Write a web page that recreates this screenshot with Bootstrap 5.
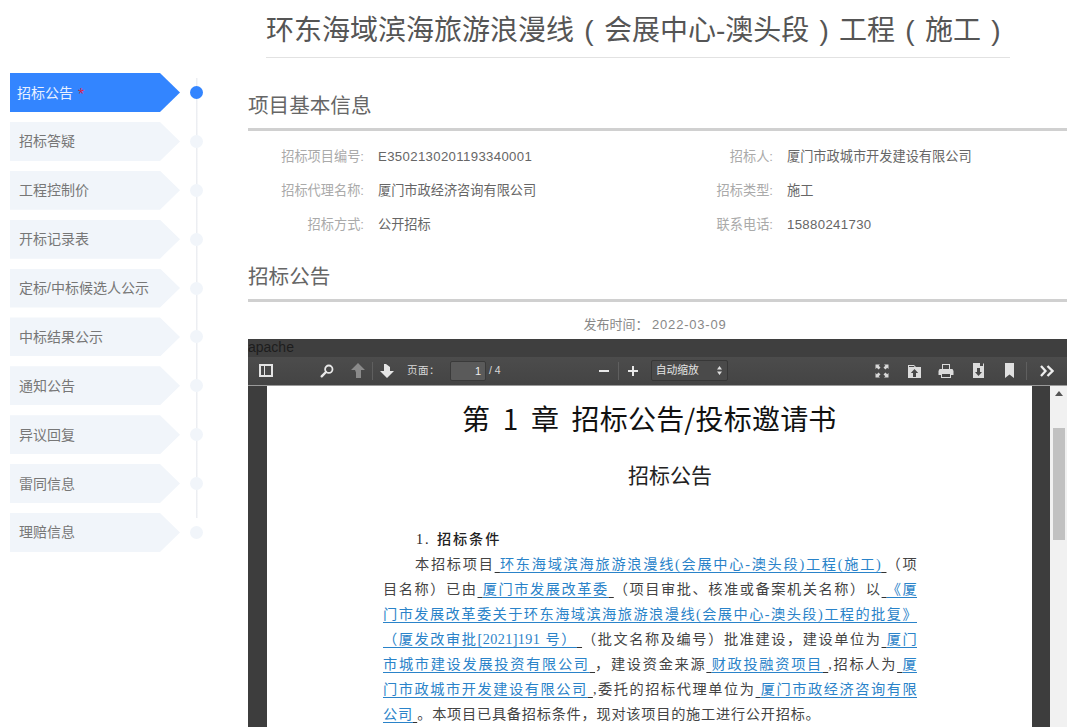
<!DOCTYPE html>
<html lang="zh-CN">
<head>
<meta charset="utf-8">
<link rel="stylesheet" href="https://cdn.jsdelivr.net/npm/bootstrap@5.3.0/dist/css/bootstrap.min.css">
<style>
html,body{height:727px;overflow:hidden;background:#fff}
body{font-family:"Liberation Sans","Noto Sans CJK SC",sans-serif;color:#555}
.shell{width:1080px;height:727px;padding-right:13px}
.side{width:238px;margin-left:10px;padding-top:73px;flex:none}
.steps{width:193px;flex:none;display:flex;flex-direction:column;gap:9.88px;background:linear-gradient(#eceef2,#eceef2) no-repeat 186px 5px/1.5px 440px}
.step{height:39px;display:flex;align-items:center;justify-content:space-between}
.tab{width:170px;height:39px;display:flex;align-items:center;padding-left:9px;background:#f1f5fa;color:#777;font-size:14px;padding-top:1px;clip-path:polygon(0 0,150px 0,170px 50%,150px 100%,0 100%)}
.dot{width:13px;height:13px;border-radius:50%;background:#f1f5fa;margin-right:.5px}
.step.on .tab{background:#3385ff;color:#e8f0ff;padding-left:7px}
.step.on .dot{background:#3385ff}
.star{color:#d8294f;margin-left:5px;font-size:16px;line-height:16px;padding-top:3px}
.mainc{width:819px;flex:none}
.title{margin:0 57px 0 18px;height:57.5px;padding-top:10px;border-bottom:1px solid #e2e2e2;font-size:28px;line-height:42px;color:#555;font-weight:400;white-space:nowrap;word-spacing:2.5px}
.sec{height:41px;margin:0;font-size:20.6px;line-height:31px;font-weight:400;color:#666;border-bottom:3px solid #d0d0d0}
.sec1{margin-top:32px}
.sec2{margin-top:19px}
.grid{display:grid;grid-template-columns:116px 293px 116px 1fr;margin-top:9px;font-size:13.2px;line-height:34px;height:102px}
.lab{text-align:right;color:#aaa}
.val{padding-left:14px;color:#666;white-space:nowrap}
.nums{letter-spacing:.35px}
.pub{height:37px;line-height:45px;text-align:center;font-size:13px;color:#888;padding-right:5px}
.pub span{letter-spacing:.8px}
.viewer{height:388px;background:#3e3e3e;overflow:hidden}
.apache{height:18px;line-height:17px;font-size:14px;color:#1d1d1d;background:#3f3f3f}
.tools{height:29px;background:linear-gradient(#4c4c4c,#444);border-bottom:1px solid #9a9a9a;color:#d9d9d9;font-size:10.5px;padding:0 11px}
.tools svg{display:block;flex:none}
.sep{width:1px;height:18px;background:#5f5f5f;flex:none}
.pg{width:36px;height:20px;margin-left:10px;background:#5a5a5a;border:1px solid #3a3a3a;border-radius:2px;text-align:right;padding-right:4px;line-height:18px;font-size:11px;color:#eee}
.pgtxt{margin-left:13px;letter-spacing:.5px;white-space:nowrap}
.pgof{margin-left:3px;white-space:nowrap}
.zoomsel{width:77px;height:21px;margin-left:13px;background:#4a4a4a;border:1px solid #373737;border-radius:2px;line-height:19px;padding:0 5px 0 4px;font-size:10.8px;color:#e4e4e4}
.m7{margin-left:7px}.m9{margin-left:9px}.m12{margin-left:12px}.m13{margin-left:13px}.m16{margin-left:16px}.m17{margin-left:17px}.m18{margin-left:18px}.m20{margin-left:20px}.m47{margin-left:47px}.m98{margin-left:98px}.m147{margin-left:147px}
.pane{height:341px}
.gut1{width:19px;flex:none;background:#3d3d3d}
.gut2{width:18px;flex:none;background:#3d3d3d}
.page{width:765px;flex:none;background:#fff;color:#333;overflow:hidden;font-family:"Noto Sans CJK SC",sans-serif}
.h1p{font-size:28px;line-height:40px;margin:12px 0 0 195px;color:#111;font-weight:400;white-space:nowrap;word-spacing:6px;letter-spacing:.2px}
.h2p{font-size:21px;line-height:30px;margin:21px 0 0 0;text-align:center;color:#222;font-weight:400;padding-left:41px}
.doc{margin:38px 0 0 116px;width:534px;font-family:"Liberation Serif","Noto Sans CJK SC",serif;font-size:14.2px;line-height:25.1px;color:#444;letter-spacing:.4px}
.ln{white-space:nowrap;text-align:justify;text-align-last:justify}
.ln.short{text-align-last:left;letter-spacing:.75px}
.lk{color:#2a83c9;text-decoration:underline;text-underline-offset:3px}
.ul{text-decoration:underline;text-decoration-color:#333;text-underline-offset:3px}
.ln.num{padding-left:33px;color:#222;font-weight:500;letter-spacing:1.9px;word-spacing:1px}
.ind{padding-left:32px}
.sb{width:17px;flex:none;background:#f1f1f1}
.sbup{height:15px}
.sbth{width:12px;height:112px;margin:27px 0 0 3px;background:#c1c1c1}
</style>
</head>
<body>
<div class="shell d-flex">
  <div class="side d-flex">
    <div class="steps">
      <div class="step on"><div class="tab">招标公告<span class="star">*</span></div><div class="dot"></div></div>
      <div class="step"><div class="tab">招标答疑</div><div class="dot"></div></div>
      <div class="step"><div class="tab">工程控制价</div><div class="dot"></div></div>
      <div class="step"><div class="tab">开标记录表</div><div class="dot"></div></div>
      <div class="step"><div class="tab">定标/中标候选人公示</div><div class="dot"></div></div>
      <div class="step"><div class="tab">中标结果公示</div><div class="dot"></div></div>
      <div class="step"><div class="tab">通知公告</div><div class="dot"></div></div>
      <div class="step"><div class="tab">异议回复</div><div class="dot"></div></div>
      <div class="step"><div class="tab">雷同信息</div><div class="dot"></div></div>
      <div class="step"><div class="tab">理赔信息</div><div class="dot"></div></div>
    </div>
  </div>
  <div class="mainc">
    <h1 class="title">环东海域滨海旅游浪漫线 ( 会展中心-澳头段 ) 工程 ( 施工 )</h1>
    <h2 class="sec sec1">项目基本信息</h2>
    <div class="grid">
      <div class="lab">招标项目编号:</div><div class="val nums">E3502130201193340001</div>
      <div class="lab">招标人:</div><div class="val">厦门市政城市开发建设有限公司</div>
      <div class="lab">招标代理名称:</div><div class="val">厦门市政经济咨询有限公司</div>
      <div class="lab">招标类型:</div><div class="val">施工</div>
      <div class="lab">招标方式:</div><div class="val">公开招标</div>
      <div class="lab">联系电话:</div><div class="val nums">15880241730</div>
    </div>
    <h2 class="sec sec2">招标公告</h2>
    <div class="pub">发布时间： <span>2022-03-09</span></div>
    <div class="viewer">
      <div class="apache">apache</div>
      <div class="tools d-flex align-items-center">
        <svg width="14" height="13" viewBox="0 0 14 13"><path fill="#e4e4e4" fill-rule="evenodd" d="M0 0h14v13H0zM2 2v9h3V2zm4 0v9h6V2z"/></svg>
        <svg class="m47" width="14" height="14" viewBox="0 0 14 14"><circle cx="8.800" cy="5.200" r="3.700" fill="none" stroke="#e8e8e8" stroke-width="1.800"/><path stroke="#e8e8e8" stroke-width="2.400" stroke-linecap="round" d="M6 8l-4.300 4.300"/></svg>
        <svg class="m17" width="14" height="15" viewBox="0 0 14 15"><path fill="#8a8a8a" d="M7 0l7 7H10v8H5V9.500L4 7H0z"/></svg>
        <div class="sep m7"></div>
        <svg class="m7" width="14" height="15" viewBox="0 0 14 15"><path fill="#e6e6e6" d="M7 15L0 8h4V1h2l4 3v4h4z"/></svg>
        <span class="pgtxt">页面：</span>
        <div class="pg">1</div>
        <span class="pgof">/ 4</span>
        <svg class="m98" width="10" height="10" viewBox="0 0 10 10"><path fill="#e8e8e8" d="M0 4h10v2H0z"/></svg>
        <div class="sep m9"></div>
        <svg class="m9" width="10" height="10" viewBox="0 0 10 10"><path fill="#e8e8e8" d="M4 0h2v4h4v2H6v4H4V6H0V4h4z"/></svg>
        <div class="zoomsel d-flex justify-content-between align-items-center"><span>自动缩放</span><svg width="5" height="9" viewBox="0 0 5 9"><path fill="#ddd" d="M2.500 0L5 3.400H0zM2.500 9L0 5.600h5z"/></svg></div>
        <svg class="m147" width="14" height="14" viewBox="0 0 14 14"><path fill="#d8d8d8" d="M.5.500h4.500L3.700 1.800l1.800 1.800-1.900 1.900-1.800-1.800L.5 5zM13.500.500V5l-1.300-1.300-1.800 1.800-1.900-1.900 1.800-1.800L9 .5zM.5 13.500V9l1.300 1.300 1.800-1.800 1.900 1.900-1.800 1.800L5 13.500zM13.500 13.500H9l1.300-1.300-1.800-1.800 1.900-1.900 1.800 1.800L13.500 9z"/></svg>
        <svg class="m18" width="15" height="14" viewBox="0 0 15 14"><path fill="#dcdcdc" fill-rule="evenodd" d="M1 4V1h6l2 2h5v11H1zM2 2v1h5.500L7 2zM7.500 5L3.800 9H6v4h3V9h2.200z"/></svg>
        <svg class="m16" width="16" height="14" viewBox="0 0 16 14"><path fill="#dcdcdc" fill-rule="evenodd" d="M4 0h8v5h2.500l1 2v4H13v3H3v-3H.5V7l1-2H4zM5 1v4h6V1zM4 10v3h8v-3z"/></svg>
        <svg class="m18" width="13" height="15" viewBox="0 0 13 15"><path fill="#dcdcdc" fill-rule="evenodd" d="M1 0h7v3h3V0l1 1v14H1zM5 5v4H3l3.500 4L10 9H8V5z"/></svg>
        <svg class="m20" width="9" height="15" viewBox="0 0 9 15"><path fill="#e0e0e0" d="M0 0h9v15l-4.500-3.500L0 15z"/></svg>
        <div class="sep m12"></div>
        <svg class="m13" width="14" height="12" viewBox="0 0 14 12"><path fill="none" stroke="#eee" stroke-width="2.300" d="M1 1l4.500 5-4.500 5M7.500 1l5 5-5 5"/></svg>
      </div>
      <div class="pane d-flex">
        <div class="gut1"></div>
        <div class="page">
          <div class="h1p">第 1 章 招标公告/投标邀请书</div>
          <div class="h2p">招标公告</div>
          <div class="doc">
            <div class="ln short num">1.&nbsp;招标条件</div>
            <div class="ln ind">本招标项目<u class="ul">&nbsp;</u><span class="lk">环东海域滨海旅游浪漫线(会展中心-澳头段)工程(施工)</span><u class="ul">&nbsp;</u>（项</div>
            <div class="ln">目名称）已由<u class="ul">&nbsp;</u><span class="lk">厦门市发展改革委</span><u class="ul">&nbsp;</u>（项目审批、核准或备案机关名称）以<u class="ul">&nbsp;</u><span class="lk">《厦</span></div>
            <div class="ln"><span class="lk">门市发展改革委关于环东海域滨海旅游浪漫线(会展中心-澳头段)工程的批复》</span></div>
            <div class="ln"><span class="lk">（厦发改审批[2021]191 号）</span><u class="ul">&nbsp;</u>（批文名称及编号）批准建设，建设单位为<u class="ul">&nbsp;</u><span class="lk">厦门</span></div>
            <div class="ln"><span class="lk">市城市建设发展投资有限公司</span><u class="ul">&nbsp;</u>，建设资金来源<u class="ul">&nbsp;</u><span class="lk">财政投融资项目</span><u class="ul">&nbsp;</u>,招标人为<u class="ul">&nbsp;</u><span class="lk">厦</span></div>
            <div class="ln"><span class="lk">门市政城市开发建设有限公司</span><u class="ul">&nbsp;</u>,委托的招标代理单位为<u class="ul">&nbsp;</u><span class="lk">厦门市政经济咨询有限</span></div>
            <div class="ln short"><span class="lk">公司</span><u class="ul">&nbsp;</u>。本项目已具备招标条件，现对该项目的施工进行公开招标。</div>
          </div>
        </div>
        <div class="gut2"></div>
        <div class="sb">
          <div class="sbup d-flex justify-content-center align-items-center"><svg width="8" height="5" viewBox="0 0 8 5"><path fill="#555" d="M4 0l4 5H0z"/></svg></div>
          <div class="sbth"></div>
        </div>
      </div>
    </div>
  </div>
</div>
<script src="https://cdn.jsdelivr.net/npm/bootstrap@5.3.0/dist/js/bootstrap.bundle.min.js"></script>
</body>
</html>
